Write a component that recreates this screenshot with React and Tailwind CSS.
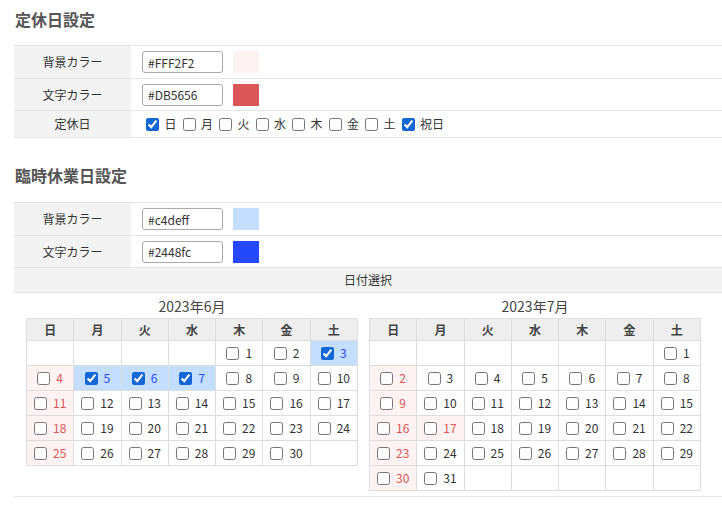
import React from "react";

const WEEK = ["日", "月", "火", "水", "木", "金", "土"];

// month data: leading blanks, day count, special days
const MONTHS = [
  { title: "2023年6月", lead: 4, days: 30, holidays: [], selected: [3, 5, 6, 7] },
  { title: "2023年7月", lead: 6, days: 31, holidays: [17], selected: [] },
];

const FONT = "font-['Noto_Sans_CJK_JP','Noto_Sans',sans-serif]";

function buildWeeks(lead, days) {
  const cells = [];
  for (let i = 0; i < lead; i++) cells.push(null);
  for (let d = 1; d <= days; d++) cells.push(d);
  while (cells.length % 7 !== 0) cells.push(null);
  const weeks = [];
  for (let i = 0; i < cells.length; i += 7) weeks.push(cells.slice(i, i + 7));
  return weeks;
}

function DayCell({ day, col, month }) {
  if (day === null) {
    return <td className="border border-[#dddddd] bg-white" />;
  }
  const sel = month.selected.includes(day);
  const red = col === 0 || month.holidays.includes(day);
  let bg = "bg-white";
  let color = "text-[#333333]";
  if (sel) {
    bg = "bg-[#c4deff]";
    color = "text-[#2448fc]";
  } else if (red) {
    bg = "bg-[#fff2f2]";
    color = "text-[#db5656]";
  }
  return (
    <td className={`border border-[#dddddd] ${bg}`}>
      <div className="flex items-center justify-center gap-[6px]">
        <input type="checkbox" defaultChecked={sel} className="m-0 w-[13px] h-[13px] accent-[#1266d6]" />
        <span className={`text-[12px] ${color}`}>{day}</span>
      </div>
    </td>
  );
}

function MonthTable({ month }) {
  const weeks = buildWeeks(month.lead, month.days);
  return (
    <div className="w-[332px]">
      <div className="h-[21px] text-center text-[14px] leading-[19px] text-[#444444]">{month.title}</div>
      <table className="w-[332px] table-fixed border-collapse">
        <thead>
          <tr className="h-[22px]">
            {WEEK.map((w) => (
              <th key={w} className="border border-[#dddddd] bg-[#eeeeee] text-[12px] font-bold text-[#444444]">{w}</th>
            ))}
          </tr>
        </thead>
        <tbody>
          {weeks.map((wk, i) => (
            <tr key={i} className="h-[25px]">
              {wk.map((d, j) => <DayCell key={j} day={d} col={j} month={month} />)}
            </tr>
          ))}
        </tbody>
      </table>
    </div>
  );
}

function ColorRow({ label, value, swatch, h }) {
  return (
    <tr className={`${h} border-b border-[#e5e5e5]`}>
      <th className="w-[117px] bg-[#f3f3f3] text-[12px] font-normal text-[#333333]">{label}</th>
      <td className="pl-[11px]">
        <div className="flex items-center gap-[10px]">
          <input
            type="text"
            defaultValue={value}
            className="w-[81px] h-[22px] rounded-[3px] border border-[#aaaaaa] px-[5px] text-[12px] text-[#333333] outline-none"
          />
          <div className={`w-[26px] h-[22px] ${swatch}`} />
        </div>
      </td>
    </tr>
  );
}

const HOLIDAYS = [
  { l: "日", c: true },
  { l: "月" },
  { l: "火" },
  { l: "水" },
  { l: "木" },
  { l: "金" },
  { l: "土" },
  { l: "祝日", c: true },
];

export default function App() {
  return (
    <div className={`w-[722px] h-[515px] overflow-hidden bg-white ${FONT}`}>
      <h2 className="pt-[7px] pl-[15px] text-[16px] leading-[24px] font-bold text-[#555555]">定休日設定</h2>

      {/* 定休日 */}
      <table className="mt-[14px] ml-[14px] w-[708px] border-collapse border-t border-[#e5e5e5]">
        <tbody>
          <ColorRow label="背景カラー" value="#FFF2F2" swatch="bg-[#fff2f2]" h="h-[33px]" />
          <ColorRow label="文字カラー" value="#DB5656" swatch="bg-[#db5656]" h="h-[32px]" />
          <tr className="h-[27px] border-b border-[#e5e5e5]">
            <th className="w-[117px] bg-[#f3f3f3] text-[12px] font-normal text-[#333333]">定休日</th>
            <td className="pl-[15px]">
              <div className="flex items-center">
                {HOLIDAYS.map((h) => (
                  <label key={h.l} className="flex items-center mr-[6px] text-[12px] text-[#333333]">
                    <input type="checkbox" defaultChecked={!!h.c} className="m-0 mr-[5.5px] w-[13px] h-[13px] accent-[#1266d6]" />
                    {h.l}
                  </label>
                ))}
              </div>
            </td>
          </tr>
        </tbody>
      </table>

      <h2 className="mt-[25px] pl-[15px] text-[16px] leading-[24px] font-bold text-[#555555]">臨時休業日設定</h2>

      {/* 臨時休業日 */}
      <table className="mt-[15px] ml-[14px] w-[708px] border-collapse border-t border-[#e5e5e5]">
        <tbody>
          <ColorRow label="背景カラー" value="#c4deff" swatch="bg-[#c4deff]" h="h-[33px]" />
          <ColorRow label="文字カラー" value="#2448fc" swatch="bg-[#2448fc]" h="h-[32px]" />
          <tr className="h-[25px] border-b border-[#e5e5e5] bg-[#f3f3f3]">
            <td colSpan={2} className="text-center text-[12px] text-[#333333]">日付選択</td>
          </tr>
          <tr className="border-b border-[#e5e5e5]">
            <td colSpan={2} className="pt-[4px] pb-[5px] pl-[12px] align-top">
              <div className="flex items-start gap-[11px]">
                {MONTHS.map((m) => <MonthTable key={m.title} month={m} />)}
              </div>
            </td>
          </tr>
        </tbody>
      </table>
    </div>
  );
}
